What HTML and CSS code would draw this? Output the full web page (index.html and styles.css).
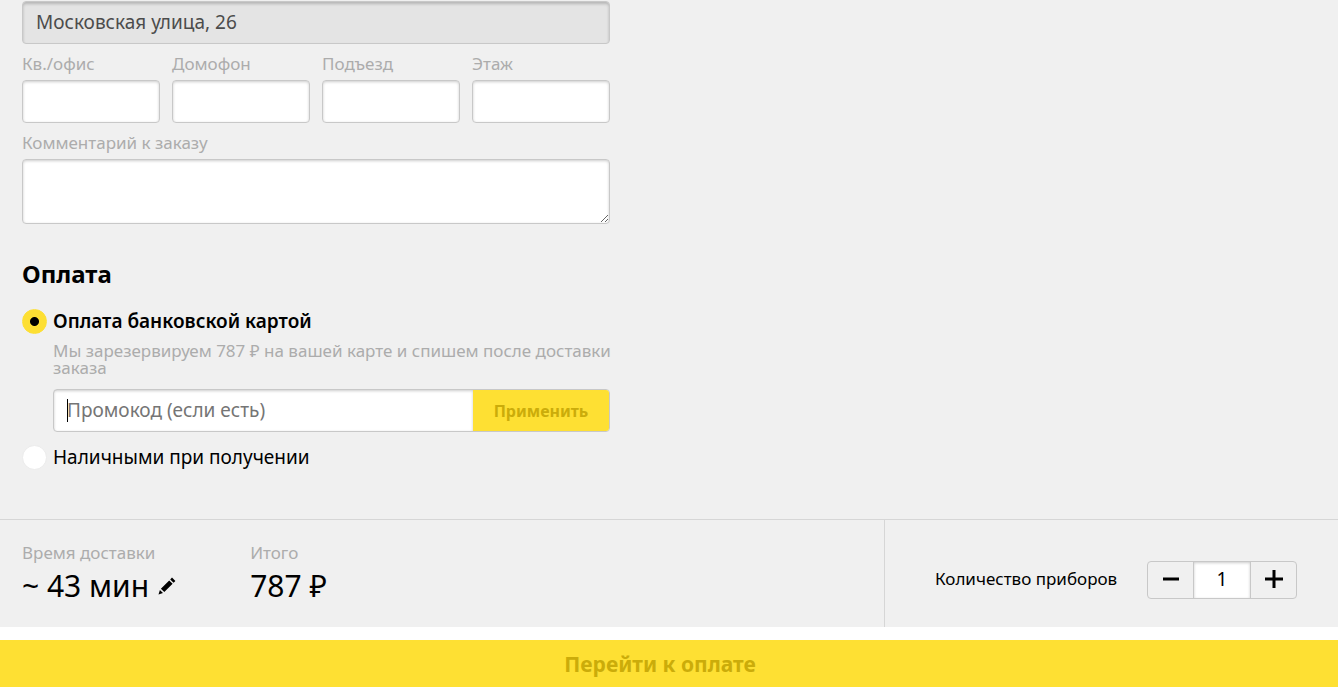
FILE: index.html
```html
<!DOCTYPE html>
<html lang="ru">
<head>
<meta charset="utf-8">
<meta name="viewport" content="width=device-width, initial-scale=1">
<title>Оформление заказа</title>
<link rel="stylesheet" href="styles.css">
</head>
<body>
<form class="checkout">
  <main class="details">
    <input class="control control--address" type="text" value="Московская улица, 26" aria-label="Адрес" disabled>
    <div class="address-row">
      <div class="field">
        <label class="caption" for="flat">Кв./офис</label>
        <input class="control" id="flat" type="text">
      </div>
      <div class="field">
        <label class="caption" for="intercom">Домофон</label>
        <input class="control" id="intercom" type="text">
      </div>
      <div class="field">
        <label class="caption" for="entrance">Подъезд</label>
        <input class="control" id="entrance" type="text">
      </div>
      <div class="field">
        <label class="caption" for="floor">Этаж</label>
        <input class="control" id="floor" type="text">
      </div>
    </div>
    <div class="field">
      <label class="caption" for="comment">Комментарий к заказу</label>
      <textarea class="control control--area" id="comment"></textarea>
    </div>

    <h2 class="heading">Оплата</h2>
    <div class="option">
      <input class="radio" type="radio" name="payment" id="card" checked>
      <label class="option-label option-label--active" for="card">Оплата банковской картой</label>
    </div>
    <div class="option-body">
      <p class="hint">Мы зарезервируем 787 ₽ на вашей карте и спишем после доставки заказа</p>
      <div class="promo">
        <input class="promo-input" type="text" placeholder="Промокод (если есть)" aria-label="Промокод" autofocus>
        <button class="promo-button" type="button">Применить</button>
      </div>
    </div>
    <div class="option">
      <input class="radio" type="radio" name="payment" id="cash">
      <label class="option-label" for="cash">Наличными при получении</label>
    </div>
  </main>

  <section class="summary">
    <div class="totals">
      <div class="total">
        <span class="total-name">Время доставки</span>
        <span class="total-value">~ 43 мин
          <button class="edit" type="button" aria-label="Изменить время">
            <svg class="edit-icon" viewBox="0 0 18 18" aria-hidden="true"><path d="M0.500 17.500L1.900 13L5 16.100ZM2.900 11.700L11.200 3.400L14.600 6.800L6.300 15.100ZM12.200 2.400L14 0.600L17.400 4L15.600 5.800Z"/></svg>
          </button>
        </span>
      </div>
      <div class="total">
        <span class="total-name">Итого</span>
        <span class="total-value">787 ₽</span>
      </div>
    </div>
    <div class="cutlery">
      <label class="cutlery-label" for="cutlery">Количество приборов</label>
      <div class="stepper">
        <button class="step" type="button" aria-label="Меньше"><svg class="step-icon" viewBox="0 0 18 18" aria-hidden="true"><path d="M1 9H17"/></svg></button>
        <input class="step-value" id="cutlery" type="text" value="1">
        <button class="step" type="button" aria-label="Больше"><svg class="step-icon" viewBox="0 0 18 18" aria-hidden="true"><path d="M0 9H18M9 0V18"/></svg></button>
      </div>
    </div>
  </section>
  <button class="submit" type="submit">Перейти к оплате</button>
</form>
</body>
</html>
```
FILE: styles.css
```css
* { box-sizing: border-box; }

body {
  margin: 0;
  background: #fff;
  color: #000;
  font-family: "Noto Sans", "Open Sans", sans-serif;
  font-size: 17px;
}

button, input, textarea { font-family: inherit; margin: 0; }
button { cursor: pointer; }

.checkout {
  display: flex;
  flex-direction: column;
  min-height: 100vh;
}

.details {
  flex: 1;
  padding: 1px 22px 48px;
  background: #f0f0f0;
}
.details > * { max-width: 588px; }

.control {
  display: block;
  width: 100%;
  height: 43px;
  padding: 0 13px 2px;
  border: 1px solid #c8c8c8;
  border-radius: 4px;
  background: #fff;
  box-shadow: inset 0 1px 3px rgba(0, 0, 0, 0.2);
  font-size: 19px;
  outline: none;
}
.control--address {
  background: #e4e4e4;
  color: #4c4c4c;
  box-shadow: inset 0 2px 3px rgba(0, 0, 0, 0.2);
}
.control--area {
  height: 65px;
  padding: 8px 13px;
  resize: vertical;
}

.address-row {
  display: grid;
  grid-template-columns: repeat(4, 1fr);
  gap: 12px;
}
.field { padding-top: 10px; }
.caption {
  display: block;
  margin-bottom: 6px;
  color: #acacac;
  font-size: 17px;
  line-height: 20px;
}

.heading {
  margin: 35px 0 20px;
  font-size: 24px;
  line-height: 30px;
}

.option {
  display: flex;
  align-items: center;
  gap: 6px;
}
.radio {
  flex: none;
  appearance: none;
  width: 25px;
  height: 25px;
  margin: 0;
  border: 1px solid #ebebeb;
  border-radius: 50%;
  background: #fff;
}
.radio:checked {
  border-color: #fddf33;
  background: radial-gradient(circle, #000 4px, #fddf33 5px);
}
.option-label { font-size: 19px; line-height: 25px; }
.option-label--active { font-weight: 600; }

.option-body { padding: 8px 0 13px 31px; }
.hint {
  margin: 0 -12px 13px 0;
  color: #acacac;
  font-size: 17px;
  line-height: 17px;
}

.promo {
  position: relative;
  display: flex;
  height: 43px;
  border: 1px solid #c8c8c8;
  border-radius: 4px;
  overflow: hidden;
  background: #fff;
}
/* Steady text cursor while the promo field is empty */
.promo:has(.promo-input:focus:placeholder-shown)::before {
  content: "";
  position: absolute;
  top: 9px;
  left: 13px;
  width: 1px;
  height: 23px;
  background: #000;
}
.promo-input {
  flex: 1;
  min-width: 0;
  padding: 0 13px 2px;
  border: 0;
  outline: none;
  background: transparent;
  box-shadow: inset 0 1px 3px rgba(0, 0, 0, 0.2);
  font-size: 19px;
}
.promo-input:placeholder-shown { caret-color: transparent; }
.promo-input::placeholder { color: #757575; }
.promo-button {
  width: 136px;
  padding: 0;
  border: 0;
  background: #fee033;
  color: #cbac0a;
  font-size: 16px;
  font-weight: 700;
}

.summary {
  display: flex;
  border-top: 1px solid #d6d6d6;
  background: #f0f0f0;
}
.totals {
  flex: 1;
  display: flex;
  gap: 74px;
  padding: 23px 22px 19px;
}
.total-name {
  display: block;
  color: #acacac;
  font-size: 17px;
  line-height: 20px;
}
.total-value {
  display: flex;
  align-items: center;
  gap: 9px;
  font-size: 30px;
  line-height: 45px;
}
.edit {
  display: flex;
  padding: 0;
  border: 0;
  background: none;
}
.edit-icon { width: 18px; height: 18px; }

.cutlery {
  display: flex;
  align-items: center;
  justify-content: space-between;
  width: 454px;
  padding: 12px 41px 0 50px;
  border-left: 1px solid #d6d6d6;
}
.cutlery-label {
  padding-bottom: 2px;
  font-size: 17px;
}
.stepper {
  display: flex;
  width: 150px;
  height: 38px;
  border: 1px solid #c8c8c8;
  border-radius: 4px;
}
.step {
  flex: 1;
  display: flex;
  align-items: center;
  justify-content: center;
  padding: 0 0 2px;
  border: 0;
  background: none;
}
.step-icon {
  width: 18px;
  height: 18px;
  stroke: #000;
  stroke-width: 3;
}
.step-value {
  width: 58px;
  padding: 0 0 2px;
  border: 1px solid #c8c8c8;
  border-width: 0 1px;
  background: #fff;
  box-shadow: inset 0 1px 3px rgba(0, 0, 0, 0.2);
  font-size: 19px;
  text-align: center;
  outline: none;
}

.submit {
  height: 47px;
  margin-top: 13px;
  padding: 0 18px 0 0;
  border: 0;
  background: #fee033;
  color: #cbac0a;
  font-size: 21px;
  font-weight: 700;
}
```
